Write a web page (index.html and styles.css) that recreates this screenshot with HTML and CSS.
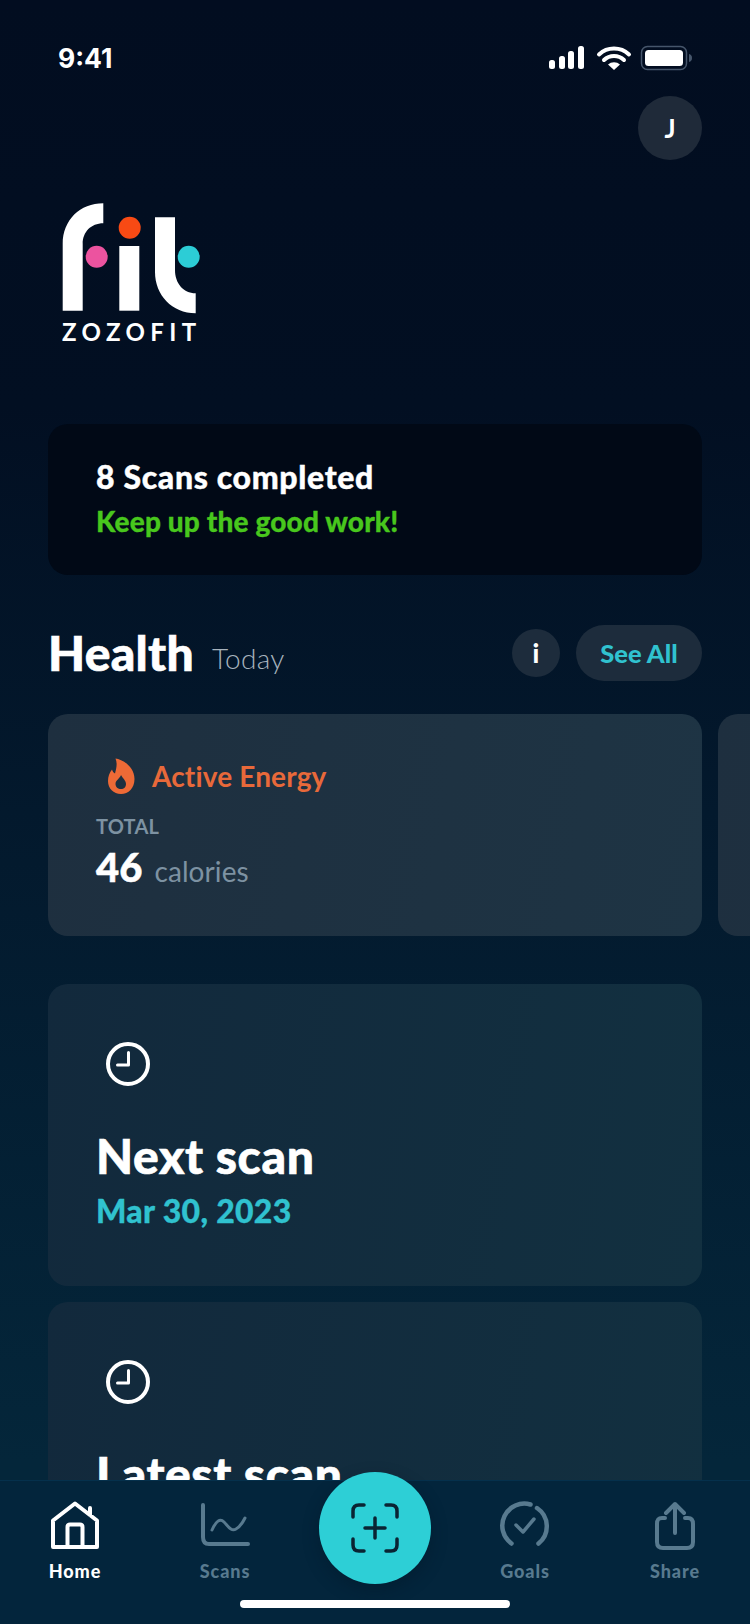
FILE: index.html
```html
<!DOCTYPE html>
<html lang="en">
<head>
  <meta charset="UTF-8">
  <meta name="viewport" content="width=device-width, initial-scale=1.0">
  <title>ZOZOFIT Home</title>
  <link rel="stylesheet" href="styles.css">
</head>
<body>
  <main class="screen">
    <header class="status-bar">
      <span class="status-time">9:41</span>
      <svg class="status-icons" width="145" height="26" viewBox="0 0 145 26">
        <rect x="1" y="15" width="6" height="9" rx="2.5" fill="#fff"/>
        <rect x="11" y="11" width="6" height="13" rx="2.5" fill="#fff"/>
        <rect x="20" y="6" width="6" height="18" rx="2.5" fill="#fff"/>
        <rect x="30" y="1" width="6" height="23" rx="2.5" fill="#fff"/>
        <path d="M51 9.5a22 22 0 0 1 30 0M56 15a14.5 14.5 0 0 1 20 0" fill="none" stroke="#fff" stroke-width="4" stroke-linecap="round"/>
        <path d="M60 19.5a9 9 0 0 1 12 0L66 25z" fill="#fff"/>
        <rect x="93.5" y="1.5" width="45" height="23" rx="6" fill="none" stroke="#46566b" stroke-width="1.5"/>
        <rect x="97" y="5" width="38" height="16" rx="3.5" fill="#fff"/>
        <path d="M141 9v8a4 4 0 0 0 3-4 4 4 0 0 0-3-4z" fill="#46566b"/>
      </svg>
    </header>

    <div class="top-row">
      <div class="avatar">J</div>
    </div>

    <div class="logo">
      <svg width="140" height="114" viewBox="0 0 140 114">
        <path d="M2.7 110.7V44C2.7 20 20 3.3 43.3 3.3V23.3C31 23.3 22.7 32 22.7 44V110.7Z" fill="#fff"/>
        <rect x="59.3" y="46" width="20" height="64.7" fill="#fff"/>
        <path d="M95 17.3H115V70C115 83 123 93.3 135.7 93.3V113.3C112 113.3 95 95 95 72Z" fill="#fff"/>
        <circle cx="69.7" cy="27.7" r="11" fill="#f84a14"/>
        <circle cx="36.7" cy="56.7" r="11" fill="#ec539f"/>
        <circle cx="128.7" cy="56.7" r="11" fill="#2ccdd6"/>
      </svg>
      <div class="logo-name">ZOZOFIT</div>
    </div>

    <section class="banner">
      <h3 class="banner-title">8 Scans completed</h3>
      <p class="banner-text">Keep up the good work!</p>
    </section>

    <section class="health-head">
      <h2 class="health-title">Health</h2>
      <span class="health-date">Today</span>
      <button class="info-btn">i</button>
      <button class="see-all">See All</button>
    </section>

    <section class="health-row">
      <article class="health-card">
        <div class="metric-name">
          <svg width="28" height="36" viewBox="0 0 28 36">
            <path fill-rule="evenodd" d="M8.500 0.500C15 1.500 27.500 8 27.500 21C27.500 30 21.500 36 14 36C6.500 36 1 30.500 1 23C1 18.500 2.500 14.500 5 11.500C5.500 13.500 6.500 14.800 8 15.500C9.500 10 10.500 5.500 8.500 0.500ZM14 17C13.500 20 8.500 22 8.500 26C8.500 29 11 31 14 31C17 31 19 29 19 26C19 22.500 15.500 20 14 17Z" fill="#ee6a36"/>
          </svg>
          <span>Active Energy</span>
        </div>
        <div class="metric-label">TOTAL</div>
        <div class="metric-value"><strong>46</strong><span>calories</span></div>
      </article>
      <article class="health-card"></article>
    </section>

    <section class="scan-card">
      <svg class="clock" width="46" height="46" viewBox="0 0 46 46">
        <circle cx="23" cy="23" r="20" fill="none" stroke="#fff" stroke-width="4"/>
        <path d="M23.500 11.500V24H12.500" fill="none" stroke="#fff" stroke-width="3" stroke-linecap="round" stroke-linejoin="round"/>
      </svg>
      <h2 class="scan-title">Next scan</h2>
      <p class="scan-date">Mar 30, 2023</p>
    </section>

    <section class="scan-card">
      <svg class="clock" width="46" height="46" viewBox="0 0 46 46">
        <circle cx="23" cy="23" r="20" fill="none" stroke="#fff" stroke-width="4"/>
        <path d="M23.500 11.500V24H12.500" fill="none" stroke="#fff" stroke-width="3" stroke-linecap="round" stroke-linejoin="round"/>
      </svg>
      <h2 class="scan-title">Latest scan</h2>
    </section>

    <nav class="tab-bar">
      <a class="tab is-active">
        <svg width="52" height="50" viewBox="0 0 52 50">
          <path d="M4 46V19.500L26 2.500L48 19.500V46ZM41 14V7M18.500 46V26C18.500 24.500 19.500 23.500 21 23.500H31C32.500 23.500 33.500 24.500 33.500 26V46" fill="none" stroke="currentColor" stroke-width="4" stroke-linejoin="round" stroke-linecap="round"/>
        </svg>
        <span>Home</span>
      </a>
      <a class="tab">
        <svg width="52" height="50" viewBox="0 0 52 50">
          <path d="M4 4V36C4 41 6 43 10 43H49" fill="none" stroke="currentColor" stroke-width="4" stroke-linecap="round"/>
          <path d="M13 29C17 20 21 17 25 21C29 25 32 31 37 28C41 26 44 21 46 17" fill="none" stroke="currentColor" stroke-width="3" stroke-linecap="round"/>
        </svg>
        <span>Scans</span>
      </a>
      <a class="fab">
        <svg width="50" height="50" viewBox="0 0 50 50">
          <path d="M3 14V8C3 4 5 2 9 2H14M36 2H41C45 2 47 4 47 8V14M47 36V42C47 46 45 48 41 48H36M14 48H9C5 48 3 46 3 42V36" fill="none" stroke="#0a2433" stroke-width="3.500" stroke-linecap="round"/>
          <path d="M25 15V35M15 25H35" fill="none" stroke="#0a2433" stroke-width="3.500" stroke-linecap="round"/>
        </svg>
      </a>
      <a class="tab">
        <svg width="52" height="50" viewBox="0 0 52 50">
          <path d="M12.500 42.500A22 22 0 0 1 31.500 3.500M38 7A22 22 0 0 1 39.500 42.500" fill="none" stroke="currentColor" stroke-width="4.500" stroke-linecap="round"/>
          <path d="M17 24L24 31L35 18" fill="none" stroke="currentColor" stroke-width="3.500" stroke-linecap="round" stroke-linejoin="round"/>
        </svg>
        <span>Goals</span>
      </a>
      <a class="tab">
        <svg width="52" height="50" viewBox="0 0 52 50">
          <path d="M16 17H13C9 17 8 19 8 23V41C8 45 10 47 14 47H38C42 47 44 45 44 41V23C44 19 42 17 39 17H36" fill="none" stroke="currentColor" stroke-width="4" stroke-linecap="round"/>
          <path d="M26 32V3M17 12L26 3L35 12" fill="none" stroke="currentColor" stroke-width="4" stroke-linecap="round" stroke-linejoin="round"/>
        </svg>
        <span>Share</span>
      </a>
    </nav>
    <div class="home-indicator"></div>
  </main>
</body>
</html>
```

FILE: styles.css
```css
:root {
  --main-font: "Lato", "Open Sans", sans-serif;
  --teal: #30c2cf;
  --muted: #7d92a2;
  --tab-muted: #587a8f;
}

html {
  box-sizing: border-box;
  font-family: var(--main-font);
}

*,
*::before,
*::after {
  box-sizing: inherit;
}

body {
  margin: 0;
  background: #020d20;
}

h2,
h3,
p {
  margin: 0;
}

.screen {
  position: relative;
  width: 750px;
  height: 1624px;
  overflow: hidden;
  color: #fff;
  background: linear-gradient(180deg, #020d20 0%, #020f22 25%, #03192d 50%, #04263a 90%);
}

.status-bar {
  display: flex;
  justify-content: space-between;
  align-items: flex-start;
  height: 96px;
  padding: 45px 57px 0 58px;
}

.status-time {
  font-family: "Inter", sans-serif;
  font-size: 26.5px;
  font-weight: 700;
  line-height: 27px;
}

.status-icons {
  display: block;
}

.top-row {
  display: flex;
  justify-content: flex-end;
  padding-right: 48px;
}

.avatar {
  display: flex;
  justify-content: center;
  align-items: center;
  width: 64px;
  height: 64px;
  border-radius: 50%;
  background: #1f2a39;
  font-size: 26px;
  font-weight: 700;
}

.logo {
  width: 140px;
  margin: 40px 0 0 60px;
}

.logo svg {
  display: block;
}

.logo-name {
  margin: 6px 0 0 2px;
  font-size: 24px;
  font-weight: 700;
  line-height: 24px;
  letter-spacing: 5.4px;
  white-space: nowrap;
}

.banner {
  display: flex;
  flex-direction: column;
  justify-content: center;
  height: 151px;
  margin: 80px 48px 0;
  padding: 0 48px 2px;
  border-radius: 20px;
  background: #010916;
}

.banner-title {
  font-size: 32px;
  font-weight: 900;
  line-height: 40px;
  letter-spacing: 0.65px;
  -webkit-text-stroke: 0.4px #fff;
}

.banner-text {
  margin-top: 4px;
  color: #48c71d;
  font-size: 28px;
  font-weight: 900;
  line-height: 40px;
  letter-spacing: 0.15px;
  -webkit-text-stroke: 0.3px #48c71d;
}

.health-head {
  display: flex;
  align-items: center;
  height: 56px;
  margin: 50px 48px 0;
}

.health-title {
  font-size: 48px;
  font-weight: 900;
  line-height: 56px;
  letter-spacing: 0.3px;
  -webkit-text-stroke: 0.6px #fff;
}

.health-date {
  flex: 1;
  margin: 10px 0 0 18px;
  color: #a7b3bd;
  font-size: 28px;
  font-weight: 300;
  letter-spacing: 0.3px;
}

.info-btn {
  width: 48px;
  height: 48px;
  padding: 0;
  border: 0;
  border-radius: 50%;
  background: #1d2c3c;
  color: #fff;
  font-family: var(--main-font);
  font-size: 26px;
  font-weight: 900;
}

.see-all {
  width: 126px;
  height: 56px;
  margin-left: 16px;
  padding: 0;
  border: 0;
  border-radius: 28px;
  background: #1d2c3c;
  color: var(--teal);
  font-family: var(--main-font);
  font-size: 25.5px;
  font-weight: 900;
}

.health-row {
  display: flex;
  gap: 16px;
  margin: 33px 0 0 48px;
}

.health-card {
  flex: 0 0 654px;
  height: 222px;
  padding: 42px 48px 0;
  border-radius: 20px;
  background: linear-gradient(100deg, #1e2f3f 0%, #1e3444 100%);
}

.metric-name {
  display: flex;
  align-items: center;
  gap: 17px;
  height: 40px;
  margin-left: 11px;
  color: #e8693a;
  font-size: 28px;
  font-weight: 700;
  letter-spacing: 0.15px;
}

.metric-label {
  margin-top: 18px;
  color: var(--muted);
  font-size: 20px;
  font-weight: 700;
  line-height: 24px;
  letter-spacing: 0.2px;
}

.metric-value {
  display: flex;
  align-items: baseline;
  gap: 12px;
  margin-top: 5px;
}

.metric-value strong {
  font-size: 40px;
  font-weight: 900;
  line-height: 48px;
  -webkit-text-stroke: 0.5px #fff;
}

.metric-value span {
  color: var(--muted);
  font-size: 28px;
  letter-spacing: 0.1px;
}

.scan-card {
  height: 302px;
  margin: 16px 48px 0;
  padding: 57px 48px 0;
  border-radius: 20px;
  background: linear-gradient(100deg, #12293c 0%, #123040 100%);
}

.health-row + .scan-card {
  margin-top: 48px;
}

.clock {
  display: block;
  margin-left: 9px;
}

.scan-title {
  margin-top: 39px;
  font-size: 48px;
  font-weight: 900;
  line-height: 60px;
  letter-spacing: 0.6px;
  -webkit-text-stroke: 0.6px #fff;
}

.scan-date {
  margin-top: 3px;
  color: var(--teal);
  font-size: 32px;
  font-weight: 900;
  line-height: 44px;
  letter-spacing: 0.3px;
  -webkit-text-stroke: 0.3px var(--teal);
}

.tab-bar {
  position: absolute;
  left: 0;
  right: 0;
  bottom: 0;
  display: grid;
  grid-template-columns: repeat(5, 150px);
  height: 144px;
  padding-top: 20px;
  background: #03253c;
  border-top: 1px solid #05304c;
}

.tab {
  display: flex;
  flex-direction: column;
  align-items: center;
  color: var(--tab-muted);
  font-size: 18px;
  font-weight: 900;
  letter-spacing: 0.9px;
}

.tab svg {
  display: block;
}

.tab span {
  margin-top: 9px;
  line-height: 22px;
}

.tab.is-active {
  color: #fff;
}

.fab {
  display: flex;
  justify-content: center;
  align-items: center;
  width: 112px;
  height: 112px;
  margin: -29px 0 0 19px;
  border-radius: 50%;
  background: #2dcfd6;
  box-shadow: 0 6px 16px rgba(0, 20, 35, 0.35);
}

.home-indicator {
  position: absolute;
  left: 240px;
  bottom: 16px;
  width: 270px;
  height: 8px;
  border-radius: 4px;
  background: #fff;
}
```
